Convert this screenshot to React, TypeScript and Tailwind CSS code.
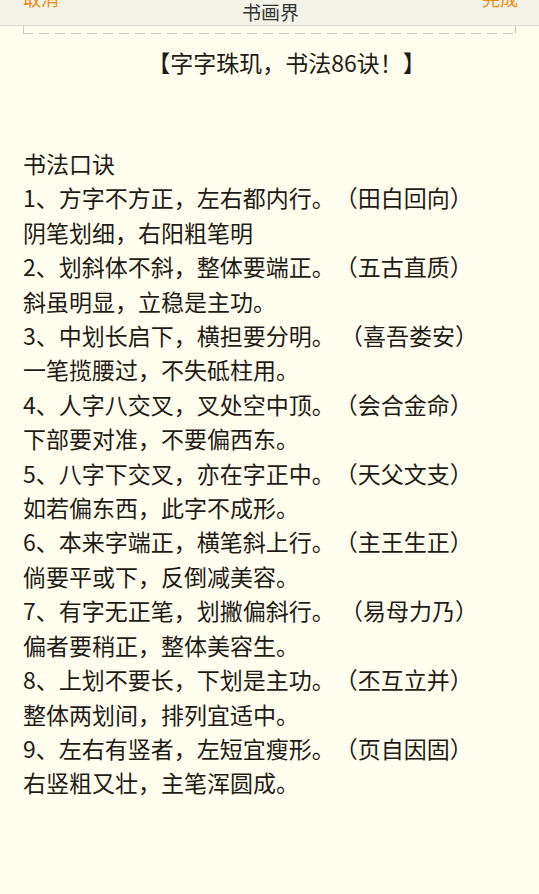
const lines = [
  "书法口诀",
  "1、方字不方正，左右都内行。（田白回向）",
  "阴笔划细，右阳粗笔明",
  "2、划斜体不斜，整体要端正。（五古直质）",
  "斜虽明显，立稳是主功。",
  "3、中划长启下，横担要分明。 （喜吾娄安）",
  "一笔揽腰过，不失砥柱用。",
  "4、人字八交叉，叉处空中顶。（会合金命）",
  "下部要对准，不要偏西东。",
  "5、八字下交叉，亦在字正中。（天父文支）",
  "如若偏东西，此字不成形。",
  "6、本来字端正，横笔斜上行。（主王生正）",
  "倘要平或下，反倒减美容。",
  "7、有字无正笔，划撇偏斜行。 （易母力乃）",
  "偏者要稍正，整体美容生。",
  "8、上划不要长，下划是主功。（丕互立并）",
  "整体两划间，排列宜适中。",
  "9、左右有竖者，左短宜瘦形。（页自因固）",
  "右竖粗又壮，主笔浑圆成。",
];

export default function App() {
  return (
    <div className="min-h-[894px] bg-[#fffeee] font-['Noto_Sans_CJK_SC',sans-serif] text-[#1f1b17] [text-spacing-trim:space-all]">
      {/* top bar */}
      <div className="flex h-[26px] items-start justify-between overflow-hidden border-b border-[#dddbd1] bg-[#f4f3ea] pl-[23px] pr-[21px]">
        <span className="-mt-[14px] text-[18px] leading-[24px] text-[#ec8a14]">取消</span>
        <span className="text-[19px] leading-[23px] text-[#333]">书画界</span>
        <span className="-mt-[14px] text-[18px] leading-[24px] text-[#ec8a14]">完成</span>
      </div>

      {/* dashed frame edge */}
      <div className="ml-[23px] h-[7px] w-[493px] border-x border-[#c9c7bd]" />
      <div className="ml-[23px] h-px w-[493px] bg-[repeating-linear-gradient(90deg,#c9c7bd_0_10px,transparent_10px_16px)]" />

      <div className="mt-[11px] pl-[34px] text-center text-[23px] leading-[34px]">
        【字字珠玑，书法86诀！】
      </div>

      <div className="mt-[67px] px-[23px] text-[23px] leading-[34.4px]">
        {lines.map((l, i) => (
          <div key={i} className="whitespace-pre">
            {l}
          </div>
        ))}
      </div>
    </div>
  );
}
